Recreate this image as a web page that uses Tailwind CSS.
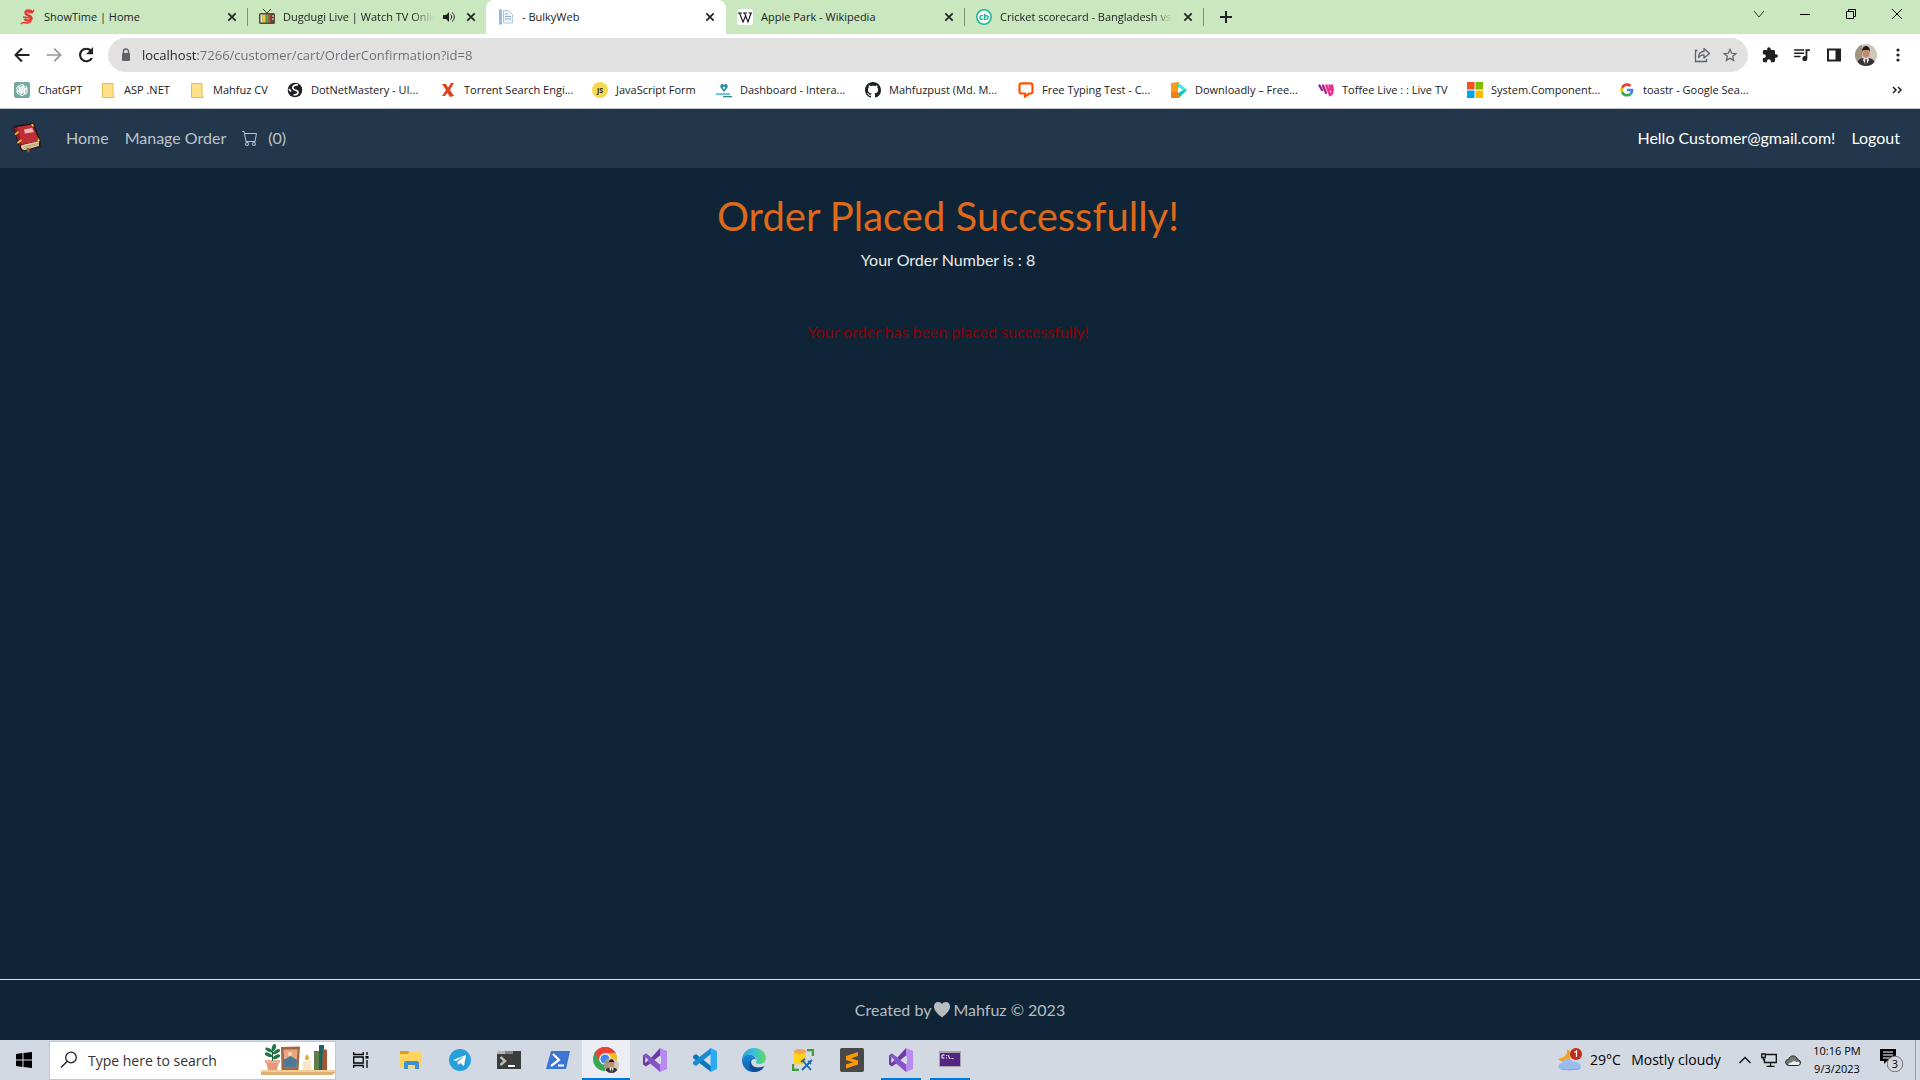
<!DOCTYPE html>
<html lang="en">
<head>
<meta charset="utf-8">
<title>- BulkyWeb</title>
<script src="https://cdn.jsdelivr.net/npm/@tailwindcss/browser@4"></script>
</head>
<body class="flex min-h-screen flex-col bg-[#0f2537] font-['Lato',sans-serif] text-base text-[#ebebeb]">

<svg class="absolute size-0" aria-hidden="true">
  <defs>
    <clipPath id="pc"><circle cx="11" cy="11" r="11"/></clipPath>
    <linearGradient id="edge-top" x1="0" y1="0" x2="1" y2="0"><stop offset="0" stop-color="#2aa5e0"/><stop offset=".5" stop-color="#35c1d6"/><stop offset="1" stop-color="#62dd5c"/></linearGradient>
    <linearGradient id="edge-left" x1="0" y1="0" x2="0" y2="1"><stop offset="0" stop-color="#1b8bd8"/><stop offset="1" stop-color="#0f5eb0"/></linearGradient>
  </defs>
  <symbol id="x" viewBox="0 0 16 16"><path d="M4.300 4.300l7.400 7.400M11.700 4.300l-7.400 7.400" stroke="#202124" stroke-width="1.700" fill="none"/></symbol>
  <symbol id="folder" viewBox="0 0 16 16"><path d="M2.500 1.500h10.500v11l1 1v2h-11.500z" fill="#ffe08a" stroke="#e3bd4d"/></symbol>
  <symbol id="vs" viewBox="0 0 24 24">
    <path fill-rule="evenodd" d="M0 7.500L3 5.500l5 4.500 9-10v8L6.500 16 3 18.500l-3-2zM2.500 9.500v5L5 12z" fill="#6b3ba6"/>
    <path d="M3 5.500L17 16v8L6 14.500 0 8z" fill="#8653c4"/>
    <path d="M2.500 9v6l2.800-3z" fill="#d5d9e4"/>
    <path d="M17 0l7 3v18l-7 3v-8l1-.5v-7L17 8z" fill="#b98bf2"/>
    <path d="M17 7.500v9L11.500 12z" fill="#d5d9e4"/>
  </symbol>
  <symbol id="photo" viewBox="0 0 22 22">
    <g clip-path="url(#pc)"><path d="M0 0h22v22H0z" fill="#cfc7ba"/><path d="M0 0h7v22H0z" fill="#a39681"/><path d="M2 22c0-7 3-8 9-8s9 1 9 8z" fill="#37323a"/><path d="M9 13h4l1 3-3 6-3-6z" fill="#e9e6e4"/><path d="M10.300 15h1.400l.8 7h-3z" fill="#5b3b4b"/><ellipse cx="11" cy="9" rx="3.700" ry="5" fill="#c48b6c"/><path d="M7 8c-.5-8 8.500-8 8 0l-1-2H8z" fill="#241c1b"/></g>
  </symbol>
</svg>

<header class="font-['Open_Sans','Noto_Sans',sans-serif] text-xs text-[#202124]">
  <!-- tab strip -->
  <div class="flex h-[34px] bg-[#cae8bf] pl-2">
    <div class="flex w-[239px] items-center gap-2 pr-[7px] pl-3">
      <svg class="size-4 shrink-0" viewBox="0 0 16 16"><path d="M12.500 3.500C11 .5 5 1 5.500 4s6.500 2.500 6 5.500-5.500 2.500-7 .5" fill="none" stroke="#e8362d" stroke-width="2.400"/><path d="M14 1l-2 3-4-1M3 8l7 1M1 15c3-4 6 1.500 10-2.500" stroke="#e8362d" stroke-width="1.400" fill="none"/></svg>
      <button class="min-w-0 flex-1 overflow-hidden text-left text-[11px] whitespace-nowrap">ShowTime | Home</button>
      <button class="size-4 shrink-0" aria-label="Close ShowTime"><svg class="size-4"><use href="#x"/></svg></button>
    </div>
    <div class="my-2 -mr-px w-px bg-[#7f9478]"></div>
    <div class="flex w-[239px] items-center gap-2 pr-[7px] pl-3">
      <svg class="size-4 shrink-0" viewBox="0 0 16 16"><path d="M4 0l4 4 4-4" stroke="#3d3a36" fill="none"/><rect y="4" width="16" height="11" rx="1.500" fill="#574a3d"/><path d="M1.500 5.500h2v8h-2z" fill="#e4e4e4"/><path d="M3.500 5.500h2.500v8H3.500z" fill="#f1cc2b"/><path d="M6 5.500h1.500v8H6z" fill="#42b6d8"/><path d="M7.500 5.500h2v8h-2z" fill="#53b840"/><path d="M9.500 5.500h2v8h-2z" fill="#dc3f34"/><circle cx="14" cy="7" r="1" fill="#c9bdaf"/><circle cx="14" cy="10" r="1" fill="#c9bdaf"/></svg>
      <button class="min-w-0 flex-1 overflow-hidden text-left text-[11px] whitespace-nowrap [mask-image:linear-gradient(to_right,black_84%,transparent)]">Dugdugi Live | Watch TV Online</button>
      <svg class="size-3 shrink-0" viewBox="0 0 12 12"><path d="M0 4h3l3-3v10L3 8H0z" fill="#202124"/><path d="M7.500 3.500c1.500 1 1.500 4 0 5M9 1.500c3 2 3 7 0 9" stroke="#202124" fill="none"/></svg>
      <button class="size-4 shrink-0" aria-label="Close Dugdugi Live"><svg class="size-4"><use href="#x"/></svg></button>
    </div>
    <div class="flex w-[240px] items-center gap-2 rounded-t-lg bg-white pr-2 pl-3">
      <svg class="size-4 shrink-0" viewBox="0 0 16 16"><path d="M5.500 1.500h5l4 4v8.500h-9z" fill="#eef4f9" stroke="#b5c8d6"/><path d="M1 .5h3v15H1z" fill="#8dbde3"/><path d="M7 5h3M7 7.500h6M7 10h6" stroke="#8eb4d2"/></svg>
      <button class="min-w-0 flex-1 overflow-hidden text-left text-[11px] whitespace-nowrap">- BulkyWeb</button>
      <button class="size-4 shrink-0" aria-label="Close BulkyWeb"><svg class="size-4"><use href="#x"/></svg></button>
    </div>
    <div class="flex w-[238px] items-center gap-2 pr-[7px] pl-[11px]">
      <svg class="size-4 shrink-0" viewBox="0 0 16 16"><rect width="16" height="16" rx="3" fill="#fff"/><path d="M1 4h4M6 4h4M11.500 4H15" fill="none" stroke="#111"/><path d="M2.500 4l3.500 9 3-7M7.500 4L11 13l3-9" fill="none" stroke="#111" stroke-width="1.100"/></svg>
      <button class="min-w-0 flex-1 overflow-hidden text-left text-[11px] whitespace-nowrap">Apple Park - Wikipedia</button>
      <button class="size-4 shrink-0" aria-label="Close Apple Park"><svg class="size-4"><use href="#x"/></svg></button>
    </div>
    <div class="my-2 w-px bg-[#7f9478]"></div>
    <div class="flex w-[238px] items-center gap-2 pr-[7px] pl-[11px]">
      <svg class="size-4 shrink-0" viewBox="0 0 16 16"><circle cx="8" cy="8" r="7.200" fill="#fff" stroke="#1fb795" stroke-width="1.600"/><path d="M7 6.800C5 6 3.800 7 3.800 8.500S5 10.800 6.800 9.800M9 4.500L8.300 10c2.700 1 4-.5 4-1.800S10.500 6.300 9 7" fill="none" stroke="#1fb795" stroke-width="1.400"/></svg>
      <button class="min-w-0 flex-1 overflow-hidden text-left text-[11px] whitespace-nowrap [mask-image:linear-gradient(to_right,black_90%,transparent)]">Cricket scorecard - Bangladesh vs Afghanistan</button>
      <button class="size-4 shrink-0" aria-label="Close Cricket scorecard"><svg class="size-4"><use href="#x"/></svg></button>
    </div>
    <div class="my-2 w-px bg-[#7f9478]"></div>
    <button class="ml-3.5 self-center" aria-label="New tab"><svg class="size-4" viewBox="0 0 16 16"><path d="M8 2v12M2 8h12" stroke="#202124" stroke-width="2"/></svg></button>
    <div class="ml-auto flex h-7 items-center">
      <button class="flex w-[46px] justify-center" aria-label="Search tabs"><svg class="size-3" viewBox="0 0 12 12"><path d="M1 3l5 6 5-6" stroke="#333" fill="none"/></svg></button>
      <button class="flex w-[46px] justify-center" aria-label="Minimize"><svg class="size-3" viewBox="0 0 12 12"><path d="M1 6.500h10" stroke="#000" fill="none"/></svg></button>
      <button class="flex w-[46px] justify-center" aria-label="Restore"><svg class="size-3" viewBox="0 0 12 12"><path d="M1.500 3.500h7v7h-7zM3.500 3.500v-2h7v7h-2" stroke="#000" fill="none"/></svg></button>
      <button class="flex w-[46px] justify-center" aria-label="Close"><svg class="size-3" viewBox="0 0 12 12"><path d="M1 1l10 10M11 1L1 11" stroke="#000" fill="none"/></svg></button>
    </div>
  </div>

  <!-- toolbar -->
  <div class="flex h-[42px] items-center bg-white pr-3">
    <div class="flex w-[108px] items-center gap-3 pl-3">
      <button aria-label="Back"><svg class="size-5" viewBox="0 0 24 24" fill="#202124"><path d="M21 10.700H7L12.800 5 11 3.200 2.500 12l8.500 8.800 1.800-1.800L7 13.300h14z"/></svg></button>
      <button aria-label="Forward"><svg class="size-5" viewBox="0 0 24 24" fill="#96989b"><path d="M3 11h14.500l-6-6L13 3.500l8.500 8.500L13 20.500 11.500 19l6-6H3z"/></svg></button>
      <button aria-label="Reload"><svg class="size-5" viewBox="0 0 24 24"><path d="M19 15.500A7.500 7.500 0 1 1 18 7" fill="none" stroke="#202124" stroke-width="2.600"/><path d="M20.500 2.500V11H12z" fill="#202124"/></svg></button>
    </div>
    <div class="flex h-[34px] flex-1 items-center rounded-full bg-[#e1e1e1] pr-2.5 pl-2.5">
      <svg class="size-4 shrink-0" viewBox="0 0 16 16"><rect x="4" y="6" width="8" height="8" rx="1" fill="#5f6368"/><path d="M5.500 7V4.500a2.500 2.500 0 0 1 5 0V7" fill="none" stroke="#5f6368" stroke-width="1.400"/></svg>
      <input aria-label="Address" value="localhost:7266/customer/cart/OrderConfirmation?id=8" class="ml-2 min-w-0 flex-1 bg-linear-to-r from-[#202124] from-[56px] to-[#6a6e73] to-[56px] bg-clip-text pt-px text-[13px] text-transparent outline-none">
      <button class="mr-2.5" aria-label="Share"><svg class="size-5" viewBox="0 0 20 20" fill="none" stroke="#5f6368" stroke-width="1.300"><path d="M5.500 5.500H3.500v11h11V14"/><path d="M6.500 12.500c0-4.500 2.500-6 5.500-6V3.500L17.500 8.500 12 13V9.800c-2.500 0-4 .7-5.500 2.700z" stroke-linejoin="round"/></svg></button>
      <button aria-label="Bookmark this page"><svg class="size-4" viewBox="0 0 24 24" fill="#5f6368"><path d="M23 9.200l-7.900-.7L12 1 8.900 8.500 1 9.200l6 5.200L5.200 22 12 18l6.800 4-1.800-7.600zM12 15.700l-4 2.400 1-4.500-3.400-3 4.600-.4L12 5.800l1.800 4.400 4.600.4-3.400 3 1 4.500z"/></svg></button>
    </div>
    <div class="flex items-center gap-3 pl-3">
      <button aria-label="Extensions"><svg class="size-5" viewBox="-2 -2 28 28" fill="#202124"><path d="M20.500 11H19V7a2 2 0 0 0-2-2h-4V3.500a2.500 2.500 0 0 0-5 0V5H4a2 2 0 0 0-2 2v3.800h1.500a2.700 2.700 0 0 1 0 5.400H2V20c0 1.100.9 2 2 2h3.800v-1.500a2.700 2.700 0 0 1 5.400 0V22H17a2 2 0 0 0 2-2v-4h1.500a2.500 2.500 0 0 0 0-5z"/></svg></button>
      <button aria-label="Media controls"><svg class="size-5" viewBox="-2 -1 28 26" fill="#202124"><path d="M1 4h14v2.200H1zM1 8.500h14v2.200H1zM1 13h9v2.200H1zM17 4h6v2.500h-3.500V17a3.500 3.500 0 1 1-2.500-3.300z"/></svg></button>
      <button aria-label="Side panel"><svg class="size-5" viewBox="0 0 20 20"><path d="M4 4.500h12v11H4z" fill="none" stroke="#202124" stroke-width="2"/><path d="M11.500 4.500H16v11h-4.500z" fill="#202124"/></svg></button>
      <button class="-mx-px" aria-label="Profile"><svg class="size-[22px]"><use href="#photo"/></svg></button>
      <button aria-label="Menu"><svg class="size-5" viewBox="0 0 20 20" fill="#202124"><circle cx="10" cy="5" r="1.600"/><circle cx="10" cy="10" r="1.600"/><circle cx="10" cy="15" r="1.600"/></svg></button>
    </div>
  </div>

  <!-- bookmarks -->
  <nav class="flex h-[33px] items-center border-b border-[#c3c7cb] bg-white pb-1 pl-3.5 text-[11px] whitespace-nowrap" aria-label="Bookmarks">
    <a href="#" class="flex w-[86px] items-center gap-2"><svg class="size-4 shrink-0" viewBox="0 0 16 16"><rect width="16" height="16" rx="2" fill="#74aa9c"/><g id="petal" fill="none" stroke="#fff" stroke-width=".9"><path id="pt" d="M5.500 9.500V5q0-2.500 2.500-2.500 1.300 0 2 .8L7 5v4"/><use href="#pt" transform="rotate(60 8 8)"/><use href="#pt" transform="rotate(120 8 8)"/><use href="#pt" transform="rotate(180 8 8)"/><use href="#pt" transform="rotate(240 8 8)"/><use href="#pt" transform="rotate(300 8 8)"/></g></svg>ChatGPT</a>
    <a href="#" class="flex w-[89px] items-center gap-2"><svg class="size-4 shrink-0"><use href="#folder"/></svg>ASP .NET</a>
    <a href="#" class="flex w-[98px] items-center gap-2"><svg class="size-4 shrink-0"><use href="#folder"/></svg>Mahfuz CV</a>
    <a href="#" class="flex w-[153px] items-center gap-2"><svg class="size-4 shrink-0" viewBox="0 0 16 16"><circle cx="8" cy="8" r="7.300" fill="#202124"/><path d="M11 3C8 2.500 5 4 6 6.500s5 1 5 3.500-3 3-4.500 3M2 7l2 2.500" fill="none" stroke="#fff" stroke-width="1.700"/></svg>DotNetMastery - UI...</a>
    <a href="#" class="flex w-[152px] items-center gap-2"><svg class="size-4 shrink-0" viewBox="0 0 16 16"><path d="M2 2h4l2 3.500L11 1h3l-4 7 4 6-4 1-2.500-4L5 14H2l4-6z" fill="#df431d"/></svg>Torrent Search Engi...</a>
    <a href="#" class="flex w-[124px] items-center gap-2"><svg class="size-4 shrink-0" viewBox="0 0 16 16"><circle cx="8" cy="8" r="8" fill="#f8d84e"/><text x="8" y="10.500" text-anchor="middle" font-size="7" font-weight="700" fill="#222">JS</text></svg>JavaScript Form</a>
    <a href="#" class="flex w-[149px] items-center gap-2"><svg class="size-4 shrink-0" viewBox="0 0 16 16"><path d="M8 10L4.500 5.500C3.500 2 7 1 8 3.500c1-2.500 4.500-1.500 3.500 2z" fill="#24899c"/><path d="M8 7.500L6.500 5 8 4.500l1.500 1z" fill="#fff"/><path d="M0 11h14v2.200H0z" fill="#6cc6d4"/><path d="M7 14h9v1.300H7z" fill="#2f8795"/></svg>Dashboard - Intera...</a>
    <a href="#" class="flex w-[153px] items-center gap-2"><svg class="size-4 shrink-0" viewBox="0 0 16 16" fill="#1b1f24"><path d="M8 0C3.580 0 0 3.580 0 8c0 3.540 2.290 6.530 5.470 7.590.4.070.55-.17.55-.38 0-.19-.01-.82-.01-1.490-2.010.37-2.530-.49-2.690-.94-.09-.23-.48-.94-.82-1.130-.28-.15-.68-.52-.01-.53.63-.01 1.080.58 1.230.82.72 1.210 1.870.87 2.330.66.07-.52.28-.87.51-1.070-1.780-.2-3.640-.89-3.640-3.950 0-.87.31-1.590.82-2.150-.08-.2-.36-1.020.08-2.120 0 0 .67-.21 2.200.82.640-.18 1.320-.27 2-.27s1.360.09 2 .27c1.530-1.040 2.200-.82 2.200-.82.44 1.100.16 1.920.08 2.120.51.56.82 1.270.82 2.150 0 3.070-1.870 3.750-3.650 3.950.29.25.54.73.54 1.480 0 1.070-.01 1.930-.01 2.200 0 .21.15.46.55.38A8.010 8.010 0 0 0 16 8c0-4.420-3.580-8-8-8z"/></svg>Mahfuzpust (Md. M...</a>
    <a href="#" class="flex w-[153px] items-center gap-2"><svg class="size-4 shrink-0" viewBox="0 0 16 16"><path d="M3.500 1.300h9q2 0 2 2v6.200q0 2-2 2H11l-4 3V11.500H3.500q-2 0-2-2V3.300q0-2 2-2z" fill="none" stroke="#ff5100" stroke-width="2.200"/></svg>Free Typing Test - C...</a>
    <a href="#" class="flex w-[147px] items-center gap-2"><svg class="size-4 shrink-0" viewBox="0 0 16 16"><path d="M0 1l8-1v16H0z" fill="#f89c1c"/><path d="M6 0l10 8-8 8z" fill="#14c6c0"/><path d="M6 0l10 8H9z" fill="#4fe6de"/><path d="M0 10h7l1 6H0z" fill="#f07f13"/><path d="M7 5l5 3-5 3z" fill="#fff"/></svg>Downloadly – Free...</a>
    <a href="#" class="flex w-[149px] items-center gap-2"><svg class="size-4 shrink-0" viewBox="0 0 16 16" fill="none" stroke-width="2.400" stroke-linecap="round"><path d="M1.500 3.500L4 8" stroke="#8d249f"/><path d="M5 3.500L8 11" stroke="#b5208f"/><path d="M8.500 3.500L12 13c3-1 3-6 2-9.500M11.500 3.500l1 4" stroke="#ef2b8b"/></svg>Toffee Live : : Live TV</a>
    <a href="#" class="flex w-[152px] items-center gap-2"><svg class="size-4 shrink-0" viewBox="0 0 16 16"><path d="M0 0h7.500v7.500H0z" fill="#f25022"/><path d="M8.500 0H16v7.500H8.500z" fill="#7fba00"/><path d="M0 8.500h7.500V16H0z" fill="#00a4ef"/><path d="M8.500 8.500H16V16H8.500z" fill="#ffb900"/></svg>System.Component...</a>
    <a href="#" class="flex items-center gap-2"><svg class="size-4 shrink-0" viewBox="0 0 48 48"><g transform="translate(4 4) scale(.83)"><path fill="#EA4335" d="M24 9.500c3.540 0 6.710 1.220 9.210 3.600l6.850-6.850C35.900 2.380 30.470 0 24 0 14.620 0 6.510 5.380 2.560 13.220l7.980 6.190C12.430 13.720 17.740 9.500 24 9.500z"/><path fill="#4285F4" d="M46.980 24.550c0-1.570-.15-3.090-.38-4.550H24v9.020h12.940c-.58 2.960-2.260 5.480-4.780 7.180l7.730 6c4.510-4.180 7.090-10.360 7.090-17.650z"/><path fill="#FBBC05" d="M10.530 28.590c-.48-1.450-.76-2.990-.76-4.590s.27-3.140.76-4.590l-7.980-6.190C.92 16.460 0 20.120 0 24c0 3.880.92 7.540 2.560 10.780z"/><path fill="#34A853" d="M24 48c6.480 0 11.930-2.130 15.890-5.810l-7.730-6c-2.150 1.450-4.920 2.300-8.160 2.300-6.260 0-11.570-4.220-13.470-9.910l-7.980 6.190C6.510 42.620 14.620 48 24 48z"/></g></svg>toastr - Google Sea...</a>
    <button class="mr-4 ml-auto" aria-label="More bookmarks"><svg class="size-3.5" viewBox="0 0 14 14"><path d="M3 4l3 3-3 3M8 4l3 3-3 3" fill="none" stroke="#202124" stroke-width="1.500"/></svg></button>
  </nav>
</header>

<!-- site navigation -->
<nav class="flex h-[59px] items-center bg-[#22374b] px-3 pb-0.5 text-[#bdc3c9]" aria-label="Site">
  <a href="#" class="mr-4" aria-label="BulkyWeb"><svg class="size-[30px]" viewBox="0 0 30 30"><path d="M1 5q0-2 2-2.500L20 0q2 0 3 3l6 17-1 1 1 3-13 3-5 1q-3 0-4-4z" fill="#2b1317"/><path d="M10 22l17-4v5l-14 4q-4 0-4-4z" fill="#e2d3a4"/><path d="M11 24l16-4M12 25.500l15-4" stroke="#9b8c61" stroke-width=".7"/><path d="M2 5l4-1 5 17q-3 1-3 3z" fill="#8f1d2a"/><path d="M5.500 4L20 1.500 27.500 18 10 21.500z" fill="#c02f38"/><path d="M12 6.500l8-1.500 2 4-9 1.500z" fill="#f2b7b5"/><path d="M3 11.500L6.500 9M5.500 20l4-3" stroke="#eec12f" stroke-width="1.700"/><path d="M19 1l2 3 1-1-1-2zM25 18.500l3-.5-1.500-3z" fill="#efc33a"/><path d="M15 25l.5 5 2-2V25z" fill="#ad591e"/></svg></a>
  <a href="#" class="px-2">Home</a>
  <a href="#" class="px-2">Manage Order</a>
  <a href="#" class="flex items-center px-2"><svg class="mr-2.5 size-4" viewBox="0 0 16 16" fill="currentColor"><path d="M0 1.500A.5.5 0 0 1 .5 1H2a.5.5 0 0 1 .485.379L2.890 3H14.500a.5.5 0 0 1 .491.592l-1.500 8A.5.5 0 0 1 13 12H4a.5.5 0 0 1-.491-.408L2.010 3.607 1.610 2H.5a.5.5 0 0 1-.5-.5zM3.102 4l1.313 7h8.170l1.313-7H3.102zM5 12a2 2 0 1 0 0 4 2 2 0 0 0 0-4zm7 0a2 2 0 1 0 0 4 2 2 0 0 0 0-4zm-7 1a1 1 0 1 1 0 2 1 1 0 0 1 0-2zm7 0a1 1 0 1 1 0 2 1 1 0 0 1 0-2z"/></svg>(0)</a>
  <a href="#" class="ml-auto px-2 text-white">Hello Customer@gmail.com!</a>
  <button class="px-2 text-white">Logout</button>
</nav>

<main class="flex-1 pt-6 pr-6 text-center">
  <h1 class="text-[40px] leading-12 text-[#df691a]">Order Placed Successfully!</h1>
  <p class="mt-2">Your Order Number is : 8</p>
  <p class="mt-12 text-[#8b0000]">Your order has been placed successfully!</p>
</main>

<footer class="flex h-[61px] items-center justify-center gap-1 border-t border-[#dee2e6] text-[#b7bcc0]">
  <span>Created by</span>
  <svg class="-mx-px size-4" viewBox="0 0 16 16" fill="currentColor"><path d="M4 0C1.500 0 0 2 0 4.500 0 9 4.500 12.500 8 15.500c3.500-3 8-6.500 8-11C16 2 14.500 0 12 0 10 0 8.700.8 8 2 7.300.8 6 0 4 0z"/></svg>
  <span>Mahfuz © 2023</span>
</footer>

<!-- desktop taskbar -->
<div class="flex h-10 items-center bg-[#d3d9e3] font-['Open_Sans','Noto_Sans',sans-serif] text-black">
  <button class="flex w-12 justify-center" aria-label="Start"><svg class="size-4" viewBox="0 0 16 16"><path d="M0 2l6.500-1v6.500H0zM7.500.9L16 0v7.500H7.500zM0 8.500h6.500V15L0 14zM7.500 8.500H16V16l-8.500-1z"/></svg></button>
  <label class="ml-px flex h-[39px] w-[287px] items-center border border-[#c4c8ce] bg-white pl-2.5">
    <svg class="size-[18px] shrink-0" viewBox="0 0 18 18"><circle cx="11" cy="6.500" r="5.300" fill="none" stroke="#222" stroke-width="1.300"/><path d="M7 10.500L1 16.500" stroke="#222" stroke-width="1.500"/></svg>
    <input placeholder="Type here to search" aria-label="Type here to search" class="ml-2.5 min-w-0 flex-1 pt-px text-sm outline-none placeholder:text-[#333]">
    <svg class="h-8 w-[74px] shrink-0" viewBox="0 0 74 32"><path d="M0 26h74v3l-3 2H0z" fill="#dfae72"/><path d="M0 26h74v2H0z" fill="#f2ce99"/><path d="M5 17h13l-2 9H7z" fill="#e9967a"/><path d="M4 16h15v3H4z" fill="#f3ac91"/><path d="M11.500 17V4" stroke="#24613d"/><g fill="#26754a"><ellipse cx="13" cy="3.500" rx="2" ry="3.500" transform="rotate(15 13 3)"/><ellipse cx="8" cy="6" rx="4" ry="1.800" transform="rotate(28 8 6)"/><ellipse cx="15.500" cy="8" rx="4" ry="1.800" transform="rotate(-30 15 8)"/><ellipse cx="7.500" cy="11" rx="4" ry="1.800" transform="rotate(24 8 11)"/><ellipse cx="15.500" cy="13" rx="4" ry="1.800" transform="rotate(-26 15 13)"/></g><path d="M20 3l19-.5-1.500 23.500h-17z" fill="#a4673d"/><path d="M22.500 5.500h14l-1 18h-12z" fill="#e8a982"/><path d="M22.500 16l7-4 6.500 4-.5 7.500h-12z" fill="#4a7a98"/><circle cx="29" cy="10" r="2" fill="#ffd8b3"/><path d="M42 17h8v9h-8z" fill="#f7e6c8"/><path d="M46 10c3 4 2 6 0 6s-3-2 0-6z" fill="#f4a12c"/><path d="M53 7h6v19h-6z" fill="#5e7f4b"/><path d="M58 1h5v25h-5z" fill="#1d6462"/><path d="M62 5l4 1v20h-5z" fill="#a5552f"/></svg>
  </label>
  <div class="flex h-10">
    <button class="flex w-[50px] items-center justify-center" aria-label="Task view"><svg class="size-4" viewBox="0 0 16 16" fill="none" stroke="#000" stroke-width="1.300"><path d="M.7 0v2.500h9.500V0M.7 5h9.500v6H.7zM.7 16v-2.500h9.500V16M14 0v3M14 8v8"/><path d="M12.500 4h3v2.500h-3z" fill="#000" stroke="none"/></svg></button>
    <button class="flex w-[49px] items-center justify-center" aria-label="File Explorer"><svg class="size-6" viewBox="0 0 24 24"><path d="M1 3h8l2 2h-2v3H1z" fill="#e29b11"/><path d="M1 6h9l2-2h10v16H1z" fill="#ffd45f"/><path d="M5 21v-6q0-2 2-2h11q2 0 2 2v6h-4v-4H9v4z" fill="#3d91d3"/></svg></button>
    <button class="flex w-[49px] items-center justify-center" aria-label="Telegram"><svg class="size-[22px]" viewBox="0 0 22 22"><circle cx="11" cy="11" r="11" fill="#26a0da"/><path d="M4 11l13-5-2 11-4-3-2 2-.5-3L15 7.500 7 12z" fill="#fff"/></svg></button>
    <button class="flex w-[49px] items-center justify-center" aria-label="Terminal"><svg class="size-6" viewBox="0 0 24 24"><path d="M0 3h24v18H0z" fill="#3c3c3c"/><path d="M0 3h8v3H0z" fill="#b5b5b5"/><path d="M8 3h8v3H8z" fill="#858585"/><path d="M3.500 9l4.500 4-4.500 4" fill="none" stroke="#bbb" stroke-width="2.500"/><path d="M11 17h7v2h-7z" fill="#fff"/></svg></button>
    <button class="flex w-[49px] items-center justify-center" aria-label="PowerShell"><svg class="size-6" viewBox="0 0 24 24"><path d="M5 3h19l-4 18H0z" fill="#3b74d3"/><path d="M7 6l6 6-8 6" fill="none" stroke="#fff" stroke-width="2.200"/><path d="M12 17.500h6" stroke="#fff" stroke-width="2"/></svg></button>
    <button class="flex w-[48px] items-center justify-center border-b-2 border-[#0078d7] bg-[#eceef3] pt-0.5" aria-label="Chrome"><svg class="size-[26px]" viewBox="0 0 26 26"><circle cx="12" cy="12" r="12" fill="#34a853"/><path d="M12 12L1.600 6A12 12 0 0 1 22.400 6z" fill="#ea4335"/><path d="M12 12L22.400 6A12 12 0 0 1 12 24z" fill="#fbbc05"/><path d="M7 15L1.600 6 12 6.500z" fill="#ea4335"/><path d="M12 6h10.400L16 14z" fill="#fbbc05"/><path d="M12 6V0a12 12 0 0 1 10.400 6z" fill="#ea4335"/><circle cx="12" cy="12" r="5.800" fill="#fff"/><circle cx="12" cy="12" r="4.600" fill="#4285f4"/><use href="#photo" x="11" y="11" width="15" height="15"/></svg></button>
    <button class="flex w-[50px] items-center justify-center" aria-label="Visual Studio"><svg class="size-6"><use href="#vs"/></svg></button>
    <button class="flex w-[49px] items-center justify-center" aria-label="Visual Studio Code"><svg class="size-6" viewBox="0 0 24 24"><path d="M0 8l3-2 15 12v6L0 10z" fill="#0877b9"/><path d="M0 16l3 2L18 6V0L0 14z" fill="#168bd2"/><path d="M17.500 0L24 3v18l-6.500 3V6.500z" fill="#2cabf2"/></svg></button>
    <button class="flex w-[49px] items-center justify-center" aria-label="Edge"><svg class="size-6" viewBox="0 0 24 24"><path d="M0 11C1 4 6 0 12 0c7 0 12 5 12 10 0 4-3 6-6 6-4 0-5-1.500-3.500-3C16 8 5 3 0 11z" fill="url(#edge-top)"/><path d="M0 12C1 5 13 5 14 11.500c-2-1.500-5.500 0-5.500 4C8.500 20 12 23 15 23.500 7 26 0 20 0 12z" fill="url(#edge-left)"/><path d="M9.500 11.500c-2 5 3 10.500 13 6.500-2 4-6 6-9.500 6-5 0-7.500-9-3.500-12.500z" fill="#0c4c97"/></svg></button>
    <button class="flex w-[49px] items-center justify-center" aria-label="Database tools"><svg class="size-[22px]" viewBox="0 0 22 22"><path d="M2 2v12q6 3 12 0V2z" fill="#ffd31d"/><ellipse cx="8" cy="2.500" rx="6" ry="2.500" fill="#f3a44d"/><path d="M15 1h6v6M1 15v6h6" fill="none" stroke="#409b3d" stroke-width="2.400"/><path d="M10 11l9 10M20 11l-10 10M9 13l4-3M16 12l3 3" stroke="#1767b2" stroke-width="1.800"/></svg></button>
    <button class="flex w-[49px] items-center justify-center" aria-label="Sublime Text"><svg class="size-6" viewBox="0 0 24 24"><rect width="24" height="24" rx="2" fill="#484848"/><path d="M6 8l12-4v4l-7 2.300 7 2.200v4L6 20.500v-4l7-2.200-7-2.300z" fill="#ff9800"/></svg></button>
    <button class="flex w-[49px] items-center justify-center px-1"><span class="flex h-full w-10 items-center justify-center border-b-2 border-[#0078d7] pt-0.5"><svg class="size-6" role="img" aria-label="Visual Studio, running"><use href="#vs"/></svg></span></button>
    <button class="flex w-[49px] items-center justify-center px-1"><span class="flex h-full w-10 items-center justify-center border-b-2 border-[#0078d7]"><svg class="size-[22px]" viewBox="0 0 22 22" role="img" aria-label="Command prompt"><path d="M0 3h22v16H0z" fill="#a7a4ad"/><path d="M1 5h20v13H1z" fill="#542483"/><path d="M5.500 7H3v3h2.500M7.500 7v1M7.500 9.500v1M9 7l2 4M12.500 10.500h2" stroke="#fff" fill="none"/></svg></span></button>
  </div>
  <div class="ml-auto flex h-10 items-center">
    <button class="flex items-center gap-2 text-sm">
      <svg class="size-6" viewBox="0 0 24 24"><path d="M9 1c1 6-3 9-9 10 5 5 12 3 13-3C13 4 11 2 9 1z" fill="#f5a126"/><path d="M5 22c-6 0-6-7-1-7 1-5 9-6 11-1 8-2 11 8 4 8z" fill="#9abdf0"/><path d="M3 20c3 2 15 2 19 0-1 3-18 3-19 0z" fill="#6795dc"/><circle cx="18" cy="6" r="6" fill="#c42b1c"/><path d="M16.500 4.500L18.500 3v6" stroke="#fff" stroke-width="1.200" fill="none"/></svg>
      <span class="w-[31px]">29°C</span><span class="w-[94px] whitespace-nowrap">Mostly cloudy</span>
    </button>
    <button class="ml-2.5 flex w-6 justify-center" aria-label="Show hidden icons"><svg class="size-3.5" viewBox="0 0 14 14"><path d="M1.500 10L7 4.500l5.500 5.500" fill="none" stroke="#111" stroke-width="1.400"/></svg></button>
    <button class="flex w-6 justify-center" aria-label="Network"><svg class="size-4" viewBox="0 0 16 16" fill="none" stroke="#111" stroke-width="1.300"><path d="M5 2.500h10.300v8H3.500V7M9.500 10.500v3.500M5.500 14.300h8"/><path d="M.7 2h3.600v3.500H.7zM2.500 5.500v3"/></svg></button>
    <button class="flex w-6 justify-center" aria-label="Cloud sync"><svg class="size-4" viewBox="0 0 16 16"><path d="M4 13.500c-4.500-.5-4.500-6-.5-6 1.500-5 8-4.500 9 0 4 .5 4 6 0 6z" fill="#777" stroke="#222"/><path d="M3.500 13c0-2 2-2.500 3-2.500 1-2 4-1.500 5-.5 2-.5 3.500.5 3 2-.5 1-1.500 1-2.500 1z" fill="#eee"/></svg></button>
    <div class="w-16 text-center text-[11px] leading-[18px] whitespace-nowrap"><p>10:16 PM</p><p>9/3/2023</p></div>
    <button class="mr-2 ml-2.5 w-7" aria-label="3 notifications"><svg class="h-6 w-7" viewBox="0 0 28 24"><path d="M1 1h16v12H8l-3 3v-3H1z"/><path d="M4 4h10M4 7h10M4 10h7" stroke="#fff"/><circle cx="16" cy="16" r="7.800" fill="#d3d6dc" stroke="#777"/><text x="16" y="20" text-anchor="middle" font-size="11">3</text></svg></button>
    <div class="mr-1 h-10 w-px bg-[#9aa0a9]"></div>
  </div>
</div>
</body>
</html>
